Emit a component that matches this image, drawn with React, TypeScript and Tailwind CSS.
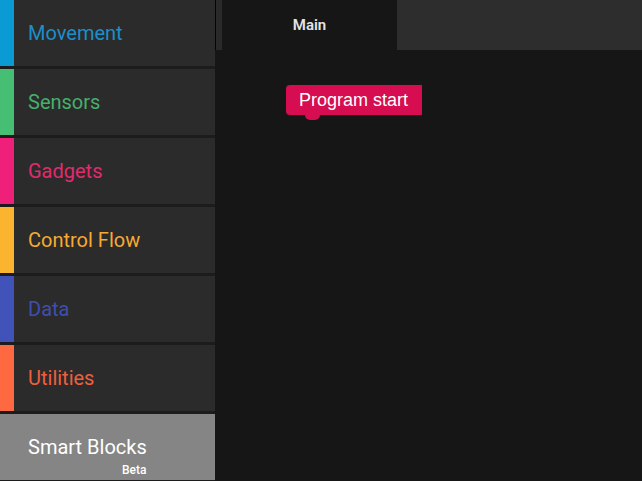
import React from 'react';

const categories = [
  { label: 'Movement', bar: 'bg-[#0a9bd5]', text: 'text-[#1b8fca]' },
  { label: 'Sensors', bar: 'bg-[#46be73]', text: 'text-[#45b06b]' },
  { label: 'Gadgets', bar: 'bg-[#ef2079]', text: 'text-[#e22a6e]' },
  { label: 'Control Flow', bar: 'bg-[#fbb430]', text: 'text-[#f7aa32]' },
  { label: 'Data', bar: 'bg-[#4152b8]', text: 'text-[#3e4fb0]' },
  { label: 'Utilities', bar: 'bg-[#ff6941]', text: 'text-[#f05f3d]' },
];

export default function App() {
  return (
    <div className="flex h-[481px] w-[642px] overflow-hidden bg-[#161616] font-['Roboto',sans-serif]">
      {/* Toolbox */}
      <aside className="flex w-[215px] shrink-0 flex-col">
        {categories.map((c) => (
          <div key={c.label} className="flex h-[69px] shrink-0 border-b-[3px] border-[#1c1c1c] bg-[#2b2b2b]">
            <div className={`w-[14px] shrink-0 ${c.bar}`} />
            <div className={`flex items-center pl-[14px] text-[20px] ${c.text}`}>{c.label}</div>
          </div>
        ))}
        <div className="relative flex h-[69px] shrink-0 border-b-[3px] border-[#1c1c1c] bg-[#858585]">
          <div className="flex items-center pl-[28px] text-[20px] text-white">Smart Blocks</div>
          <span className="absolute left-[122px] top-[50px] text-[12px] font-medium leading-none text-white">Beta</span>
        </div>
      </aside>

      {/* Workspace */}
      <main className="flex flex-1 flex-col">
        <div className="flex h-[50px] shrink-0">
          <div className="w-px bg-[#050505]" />
          <div className="w-[6px] bg-[#2a2a2a]" />
          <div className="flex w-[175px] items-center justify-center bg-[#161616] text-[15px] font-semibold text-[#e4e4e4]">
            Main
          </div>
          <div className="flex-1 bg-[#2d2d2d]" />
        </div>
        <div className="relative flex-1">
          <div className="absolute left-[71px] top-[35px]">
            <div className="flex h-[30px] w-[136px] items-center rounded-l-[4px] bg-[#d60d50] pl-[13px] font-['Liberation_Sans',Arial,sans-serif] text-[18px] text-white">
              Program start
            </div>
            <div className="ml-[19px] h-[5px] w-[15px] rounded-b-[6px] bg-[#d60d50]" />
          </div>
        </div>
      </main>
    </div>
  );
}
